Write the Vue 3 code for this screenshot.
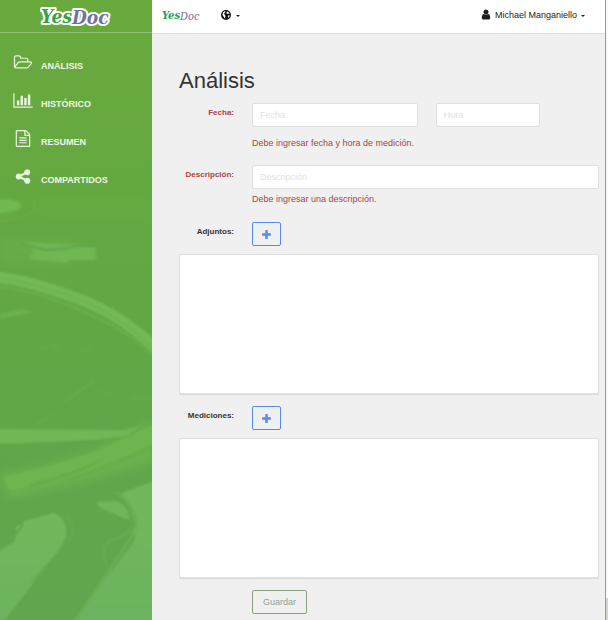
<script setup>
import { ref } from 'vue'

const menu = [
  {
    label: 'ANÁLISIS',
    box: '0 0 2048 1792',
    path: 'M1845 931q0-35-53-35h-1088q-40 0-85.5 21.5t-71.5 52.5l-294 363q-18 24-18 40 0 35 53 35h1088q40 0 86-22t71-53l294-363q18-22 18-39zm-1141-163h768v-160q0-40-28-68t-68-28h-576q-40 0-68-28t-28-68v-64q0-40-28-68t-68-28h-320q-40 0-68 28t-28 68v853l256-315q44-53 116-87.5t140-34.5zm1269 163q0 62-46 120l-295 363q-43 53-116 87.5t-140 34.5h-1088q-92 0-158-66t-66-158v-960q0-92 66-158t158-66h320q92 0 158 66t66 158v32h544q92 0 158 66t66 158v160h192q54 0 99 24.5t67 70.5q15 32 15 68z'
  },
  {
    label: 'HISTÓRICO',
    box: '0 0 2048 1792',
    path: 'M640 896v512h-256v-512h256zm384-512v1024h-256v-1024h256zm1024 1152v128h-2048v-1536h128v1408h1920zm-640-896v768h-256v-768h256zm384-384v1152h-256v-1152h256z'
  },
  {
    label: 'RESUMEN',
    box: '-128 0 2048 1792',
    path: 'M1596 380q28 28 48 76t20 88v1152q0 40-28 68t-68 28h-1344q-40 0-68-28t-28-68v-1600q0-40 28-68t68-28h896q40 0 88 20t76 48zm-444-244v376h376q-10-29-22-41l-313-313q-12-12-41-22zm384 1528v-1024h-416q-40 0-68-28t-28-68v-416h-768v1536h1280zm-1024-864q0-14 9-23t23-9h704q14 0 23 9t9 23v64q0 14-9 23t-23 9h-704q-14 0-23-9t-9-23v-64zm736 224q14 0 23 9t9 23v64q0 14-9 23t-23 9h-704q-14 0-23-9t-9-23v-64q0-14 9-23t23-9h704zm0 256q14 0 23 9t9 23v64q0 14-9 23t-23 9h-704q-14 0-23-9t-9-23v-64q0-14 9-23t23-9h704z'
  },
  {
    label: 'COMPARTIDOS',
    box: '-128 0 2048 1792',
    path: 'M1344 1024q133 0 226.5 93.5t93.5 226.5-93.5 226.5-226.5 93.5-226.5-93.5-93.5-226.5q0-12 2-34l-360-180q-92 86-218 86-133 0-226.5-93.5t-93.5-226.5 93.5-226.5 226.5-93.5q126 0 218 86l360-180q-2-22-2-34 0-133 93.5-226.5t226.5-93.5 226.5 93.5 93.5 226.5-93.5 226.5-226.5 93.5q-126 0-218-86l-360 180q2 22 2 34t-2 34l360 180q92-86 218-86z'
  }
]

const plusPath =
  'M1600 736v192q0 40-28 68t-68 28h-416v416q0 40-28 68t-68 28h-192q-40 0-68-28t-28-68v-416h-416q-40 0-68-28t-28-68v-192q0-40 28-68t68-28h416v-416q0-40 28-68t68-28h192q40 0 68 28t28 68v416h416q40 0 68 28t28 68z'

const fecha = ref('')
const hora = ref('')
const descripcion = ref('')
</script>

<template>
  <div class="page">
    <aside class="sidebar">
      <svg class="art" viewBox="0 0 152 620" preserveAspectRatio="xMidYMin slice" aria-hidden="true">
        <defs>
          <linearGradient id="base" x1="0" y1="0" x2="0" y2="1">
            <stop offset="0" stop-color="#69aa3d" />
            <stop offset="0.5" stop-color="#62a744" />
            <stop offset="1" stop-color="#5fa64f" />
          </linearGradient>
          <linearGradient id="pale" x1="0" y1="0" x2="0" y2="1">
            <stop offset="0" stop-color="#72b85b" />
            <stop offset="1" stop-color="#6cb35f" />
          </linearGradient>
          <filter id="soft"><feGaussianBlur stdDeviation="1" /></filter>
          <filter id="softer"><feGaussianBlur stdDeviation="4" /></filter>
        </defs>
        <rect width="152" height="620" fill="url(#base)" />
        <g filter="url(#softer)">
          <path d="M-5 198Q70 176 160 158V206H-5Z" fill="#64a940" />
          <path d="M36 200H152V216H36Z" fill="#66aa43" />
          <path d="M0 238H70V262H0Z" fill="#67ab47" />
          <path d="M0 474Q90 460 153 420V462Q95 482 8 498Z" fill="#6bb14f" />
        </g>
        <g filter="url(#soft)" fill="none">
          <path d="M-4 199Q18 198 21 205Q21 212 -4 214Z" fill="#72b951" />
          <path d="M22 202Q22 215 0 216M30 198Q42 210 24 216Q14 220 0 221" stroke="#6cb14d" />
          <path d="M18 242L96 245V260H70L67 263L28 259L34 250Z" fill="#70b652" />
          <path d="M20 243L45 250L70 248L74 246H96" stroke="#5fa548" stroke-width="2" />
          <path d="M-4 277Q25 280 62 293Q118 310 157 350" stroke="#73b955" stroke-width="11" />
          <path d="M0 278Q72 291 109 314Q138 332 153 350" stroke="#68af4a" />
          <path d="M0 286Q48 294 90 315Q126 329 149 353" stroke="#6bb04e" stroke-width="2" />
          <path d="M0 314L22 309L33 312L0 319Z" fill="#6bb14f" />
          <path d="M38 349L58 344L51 350L62 350M78 352L93 346M88 354L94 348M100 391L112 394L108 398M130 399L150 398" stroke="#69ae4d" />
          <path d="M64 402L94 381M35 426L52 414" stroke="#6cb253" />
        </g>
        <g filter="url(#soft)">
          <path d="M-4 429L124 430L141 426L126 436L94 440L-4 444Z" fill="#71b755" />
          <path d="M4 477Q93 457 122 440L157 423V446Q95 474 10 490Z" fill="#6eb550" />
          <path d="M30 484Q72 474 107 457L88 468Q60 479 30 487Z" fill="#64ab4c" />
          <path d="M60 481Q112 465 157 441V448Q95 474 60 483Z" fill="#68ae4b" />
          <path d="M22 522L53 513Q68 517 66 537L60 548L2 624H-4V552L13 543Z" fill="url(#pale)" />
          <path d="M122 493L157 480V624H71L133 543Q141 526 122 493Z" fill="url(#pale)" />
          <path d="M116 492Q133 503 136 521Q136 532 127 544L73 624" fill="none" stroke="#69b053" stroke-width="3" />
          <path d="M96 502L116 501Q128 504 130 520Q122 518 113 513L99 507Z" fill="#70b75a" />
          <path d="M67 516Q77 527 71 537Q58 554 31 582" fill="none" stroke="#64aa4f" stroke-width="2" />
          <path d="M132 529Q122 538 109 541Q101 548 106 565" fill="none" stroke="#67ad53" stroke-width="2" />
          <path d="M14 531Q14 523 22 523Q21 532 15 532Z" fill="#73b65d" stroke="#5ba34c" stroke-width="2" />
          <path d="M137 531L153 545" stroke="#75bb64" />
        </g>
      </svg>
      <a class="brand" href="#" aria-label="YesDoc">
        <svg width="72" height="26" viewBox="0 0 72 26">
          <g class="mark outlined">
            <text x="1" y="19" fill="#36a044">Yes</text>
            <text x="32" y="20" fill="#6f73a0">Doc</text>
          </g>
        </svg>
      </a>
      <nav class="menu">
        <a v-for="item in menu" :key="item.label" href="#" class="menu-item">
          <svg class="menu-icon" :viewBox="item.box"><path :d="item.path" /></svg>
          <span class="menu-label">{{ item.label }}</span>
        </a>
      </nav>
    </aside>

    <div class="content">
      <header class="topbar">
        <a href="#" class="small-brand" aria-label="YesDoc">
          <svg width="42" height="16" viewBox="0 0 42 16">
            <g class="mark small">
              <text x="0" y="12" fill="#22a452">Yes</text>
              <text x="18" y="13" class="light" fill="#74699c">Doc</text>
            </g>
          </svg>
        </a>
        <button type="button" class="drop" aria-label="Idioma">
          <svg width="10" height="10" viewBox="0 0 20 20">
            <circle cx="10" cy="10" r="10" fill="#151515" />
            <path d="M4 5L8 2L9 4L7 6L6 8L8 10L9 13L7 17L5 13L3 10Z" fill="#fff" />
            <path d="M12 3L16 5L17 8L14 7L12 8L11 6ZM14 11L18 11L16 14L14 16Z" fill="#fff" />
          </svg>
          <span class="caret"></span>
        </button>
        <button type="button" class="drop user">
          <svg width="10" height="11" viewBox="128 64 1536 1664">
            <path d="M1536 1399q0 109-62.5 187t-150.5 78h-854q-88 0-150.5-78t-62.5-187q0-85 8.5-160.5t31.5-152 58.5-131 94-89 134.5-34.5q131 128 313 128t313-128q76 0 134.5 34.5t94 89 58.5 131 31.5 152 8.5 160.5zm-256-887q0 159-112.5 271.5t-271.5 112.5-271.5-112.5-112.5-271.5 112.5-271.5 271.5-112.5 271.5 112.5 112.5 271.5z" fill="#1c1c1c" />
          </svg>
          <span>Michael Manganiello</span>
          <span class="caret"></span>
        </button>
      </header>

      <main class="main">
        <h1>Análisis</h1>
        <form @submit.prevent>
          <div class="row">
            <label class="invalid" for="fecha">Fecha:</label>
            <div class="field">
              <div class="pair">
                <input id="fecha" v-model="fecha" type="text" placeholder="Fecha" />
                <input v-model="hora" type="text" placeholder="Hora" aria-label="Hora" />
              </div>
              <p class="error spaced">Debe ingresar fecha y hora de medición.</p>
            </div>
          </div>
          <div class="row">
            <label class="invalid" for="descripcion">Descripción:</label>
            <div class="field">
              <input id="descripcion" v-model="descripcion" type="text" placeholder="Descripción" />
              <p class="error">Debe ingresar una descripción.</p>
            </div>
          </div>
          <div class="row">
            <label for="add-adjunto">Adjuntos:</label>
            <button id="add-adjunto" type="button" class="add">
              <svg viewBox="192 128 1408 1408"><path :d="plusPath" /></svg>
            </button>
          </div>
          <section class="panel"></section>
          <div class="row">
            <label for="add-medicion">Mediciones:</label>
            <button id="add-medicion" type="button" class="add">
              <svg viewBox="192 128 1408 1408"><path :d="plusPath" /></svg>
            </button>
          </div>
          <section class="panel"></section>
          <div class="row">
            <span></span>
            <button type="submit" class="save">Guardar</button>
          </div>
        </form>
      </main>
    </div>
    <div class="edge"></div>
  </div>
</template>

<style>
body {
  background: #f0f0f0;
}
</style>

<style scoped>
* {
  box-sizing: border-box;
}
.page {
  display: flex;
  min-height: 100vh;
  font-family: 'Liberation Sans', Arial, sans-serif;
  font-size: 9px;
  color: #222;
}
a {
  text-decoration: none;
}
.sidebar {
  position: relative;
  flex: 0 0 152px;
  overflow: hidden;
  background: #5fa64f;
}
.art {
  position: absolute;
  inset: 0;
  width: 100%;
  height: 100%;
}
.brand {
  position: relative;
  display: flex;
  justify-content: center;
  height: 33px;
  padding-top: 4px;
  border-bottom: 1px solid #8fc070;
}
.mark {
  font-family: 'DejaVu Serif Condensed', 'DejaVu Serif', serif;
  font-style: italic;
  font-weight: bold;
  font-size: 19px;
}
.mark.outlined {
  stroke: #fff;
  stroke-width: 4px;
  stroke-linejoin: round;
  paint-order: stroke;
}
.mark.small {
  font-size: 11px;
}
.light {
  font-weight: normal;
}
.menu {
  position: relative;
  display: flex;
  flex-direction: column;
  padding: 21px 13px;
}
.menu-item {
  display: flex;
  align-items: flex-start;
  gap: 8px;
  height: 38px;
  color: #f0f6e8;
}
.menu-icon {
  width: 20px;
  height: 17px;
  fill: #e8f4de;
}
.menu-label {
  padding-top: 6px;
  line-height: 12px;
  font-weight: bold;
}
.content {
  flex: 1;
  min-width: 0;
  background: #f0f0f0;
}
.topbar {
  display: flex;
  align-items: center;
  height: 34px;
  padding: 0 20px 4px 10px;
  background: #fff;
  border-bottom: 1px solid #dedede;
}
.small-brand {
  display: flex;
  margin-right: 17px;
}
.drop {
  display: flex;
  align-items: center;
  gap: 5px;
  padding: 0;
  border: 0;
  background: none;
  font: inherit;
  color: #222;
}
.user {
  gap: 4px;
  margin-left: auto;
}
.caret {
  margin-top: 2px;
  border: 2px solid transparent;
  border-top-color: #222;
  border-bottom: 0;
}
.main {
  padding: 33px 6px 6px 27px;
}
h1 {
  margin: 0 0 8px;
  font-size: 22px;
  line-height: 28px;
  font-weight: normal;
  color: #333;
}
.row {
  display: grid;
  grid-template-columns: 55px minmax(0, 1fr);
  column-gap: 18px;
  align-items: start;
  justify-items: start;
}
label {
  justify-self: end;
  padding-top: 5px;
  font-size: 8px;
  line-height: 10px;
  font-weight: bold;
  color: #333;
}
.invalid,
.error {
  color: #a94442;
}
.field {
  width: 100%;
}
.pair {
  display: grid;
  grid-template-columns: 8fr 5fr 2fr;
  column-gap: 18px;
}
input {
  width: 100%;
  height: 24px;
  padding: 0 7px;
  border: 1px solid #e0e0e0;
  border-radius: 2px;
  background: #fff;
  font: inherit;
  color: #333;
}
input::placeholder {
  color: #e2e2e2;
  opacity: 1;
}
input:focus {
  outline: none;
  border-color: #5c8ff0;
}
.field > input {
  display: block;
}
.error {
  margin: 4px 0 17px;
  line-height: 12px;
}
.error.spaced {
  margin: 10px 0 16px;
}
.add,
.save {
  display: flex;
  align-items: center;
  justify-content: center;
  height: 24px;
  padding: 0 9px;
  border: 1px solid #568af2;
  border-radius: 2px;
  background: transparent;
}
.add svg {
  width: 9px;
  height: 9px;
  fill: #568af2;
}
.panel {
  height: 140px;
  margin: 8px 0 12px;
  border: 1px solid #e0e0e0;
  border-radius: 2px;
  background: #fff;
  box-shadow: 0 1px 1px #dadada;
}
.save {
  padding: 0 10px;
  border-color: #87a17f;
  font: inherit;
  color: #91a18c;
}
.edge {
  flex: 0 0 3px;
  border-left: 1px solid #999;
  background: linear-gradient(to top, #d6d6d0 22px, #fafafa 22px);
}
</style>
